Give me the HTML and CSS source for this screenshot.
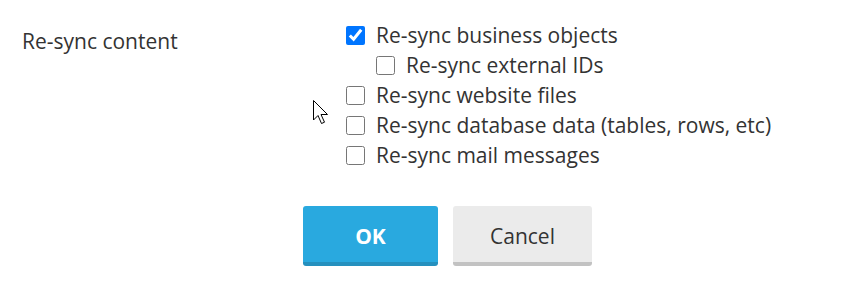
FILE: index.html
```html
<!DOCTYPE html>
<html lang="en">
<head>
<meta charset="UTF-8">
<meta name="viewport" content="width=device-width, initial-scale=1.0">
<title>Re-sync</title>
<link rel="stylesheet" href="styles.css">
</head>
<body>
    <div id="dialog">
        <div class="field">
            <div class="fieldLabel">Re-sync content</div>
            <div class="options">
                <label class="option"><input type="checkbox" checked> Re-sync business objects</label>
                <label class="option sub"><input type="checkbox"> Re-sync external IDs</label>
                <label class="option"><input type="checkbox"> Re-sync website files</label>
                <label class="option"><input type="checkbox"> Re-sync database data (tables, rows, etc)</label>
                <label class="option"><input type="checkbox"> Re-sync mail messages</label>
            </div>
        </div>

        <div class="buttons">
            <button class="btn ok">OK</button>
            <button class="btn cancel">Cancel</button>
        </div>

        <svg class="cursor" width="20" height="28" viewBox="0 0 20 28">
            <path d="M1.5 1.5 L1.5 21 L6 16.5 L9.5 24.5 L12.5 23.2 L9 15.5 L15.5 15.5 Z" fill="#fff" stroke="#000" stroke-width="1" stroke-linejoin="miter"/>
        </svg>
    </div>
</body>
</html>
```
FILE: styles.css
```css
body {
    font-family: "Open Sans", Arial, sans-serif;
    background-color: #fff;
    color: #333;
    margin: 0;
    padding: 0;
}

#dialog {
    position: relative;
    padding-top: 20px;
}

.field {
    display: flex;
}

.fieldLabel {
    width: 324px;
    padding-left: 22px;
    padding-top: 6px;
    font-size: 21px;
    line-height: 30px;
}

.options {
    display: flex;
    flex-direction: column;
}

.option {
    display: flex;
    align-items: center;
    height: 30px;
    font-size: 21px;
    cursor: pointer;
}

.option input {
    width: 19px;
    height: 19px;
    margin: 0 11px 0 0;
}

.option.sub {
    padding-left: 30px;
}

.buttons {
    display: flex;
    gap: 15px;
    margin-top: 36px;
    padding-left: 303px;
}

.btn {
    height: 60px;
    padding-top: 4px;
    border: none;
    border-radius: 3px;
    font-family: "Open Sans", Arial, sans-serif;
    font-size: 21px;
    cursor: pointer;
}

.ok {
    width: 135px;
    background-color: #29a9df;
    border-bottom: 4px solid #2590be;
    color: #fff;
    font-weight: bold;
}

.cancel {
    width: 139px;
    background-color: #ebebeb;
    border-bottom: 4px solid #c2c2c2;
    color: #333;
}

.cursor {
    position: absolute;
    left: 312px;
    top: 99px;
}
```
